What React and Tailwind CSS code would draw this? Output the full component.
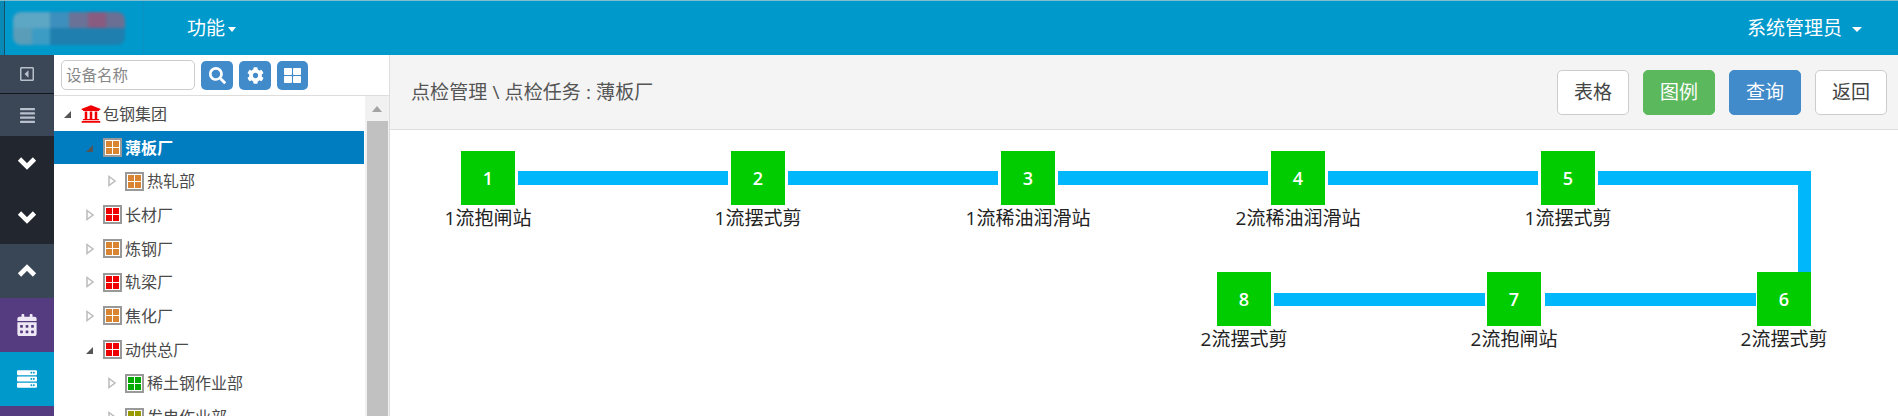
import {
  FaAlignJustify,
  FaCalendarAlt,
  FaCog,
  FaRegCaretSquareLeft,
  FaSearch,
  FaServer,
  FaThLarge,
  FaUniversity,
} from "react-icons/fa";

const FONT = "font-['Open_Sans','Noto_Sans_CJK_SC',sans-serif]";

function Chevron({ up }) {
  return (
    <svg width="20" height="14" viewBox="0 0 20 14">
      <path d={up ? "M2.5 11 L10 3.5 L17.5 11" : "M2.5 3 L10 10.5 L17.5 3"} fill="none" stroke="#fff" strokeWidth="4.6" />
    </svg>
  );
}

const SIDE_ITEMS = [
  { icon: <FaRegCaretSquareLeft size={16} />, cls: "h-[39px] bg-[#3b4657] border-b border-[#14171c] text-[#b8c0cc]" },
  { icon: <FaAlignJustify size={17} />, cls: "h-[42px] bg-[#3b4657] text-[#b8c0cc]" },
  { icon: <Chevron />, cls: "h-[54px] bg-[#22262e]" },
  { icon: <Chevron />, cls: "h-[54px] bg-[#22262e]" },
  { icon: <Chevron up />, cls: "h-[54px] bg-[#394655]" },
  { icon: <FaCalendarAlt size={22} />, cls: "h-[54px] bg-[#553b7f] text-[#eee8f5]" },
  { icon: <FaServer size={20} />, cls: "h-[54px] bg-[#0099cc] text-white" },
  { icon: null, cls: "h-[54px] bg-[#553b7f]" },
];

const TREE = [
  { label: "包钢集团", level: 0, open: true, bank: true },
  { label: "薄板厂", level: 1, open: true, color: "bg-[#d98433]", selected: true },
  { label: "热轧部", level: 2, color: "bg-[#d98433]" },
  { label: "长材厂", level: 1, color: "bg-[#ee0000]" },
  { label: "炼钢厂", level: 1, color: "bg-[#d98433]" },
  { label: "轨梁厂", level: 1, color: "bg-[#ee0000]" },
  { label: "焦化厂", level: 1, color: "bg-[#d98433]" },
  { label: "动供总厂", level: 1, open: true, color: "bg-[#ee0000]" },
  { label: "稀土钢作业部", level: 2, color: "bg-[#00aa00]" },
  { label: "发电作业部", level: 2, color: "bg-[#999900]" },
];

const INDENT = ["pl-[9px]", "pl-[31px]", "pl-[53px]"];

const NODES = [
  { n: 1, name: "1流抱闸站", pos: "left-[71px] top-[21px]" },
  { n: 2, name: "1流摆式剪", pos: "left-[341px] top-[21px]" },
  { n: 3, name: "1流稀油润滑站", pos: "left-[611px] top-[21px]" },
  { n: 4, name: "2流稀油润滑站", pos: "left-[881px] top-[21px]" },
  { n: 5, name: "1流摆式剪", pos: "left-[1151px] top-[21px]" },
  { n: 6, name: "2流摆式剪", pos: "left-[1367px] top-[142px]" },
  { n: 7, name: "2流抱闸站", pos: "left-[1097px] top-[142px]" },
  { n: 8, name: "2流摆式剪", pos: "left-[827px] top-[142px]" },
];

const LINES = [
  "left-[128px] top-[41px] w-[210px] h-[14px]",
  "left-[398px] top-[41px] w-[210px] h-[14px]",
  "left-[668px] top-[41px] w-[210px] h-[14px]",
  "left-[938px] top-[41px] w-[210px] h-[14px]",
  "left-[1208px] top-[41px] w-[213px] h-[14px]",
  "left-[1408px] top-[41px] w-[13px] h-[101px]",
  "left-[1155px] top-[163px] w-[211px] h-[13px]",
  "left-[884px] top-[163px] w-[211px] h-[13px]",
];

function NodeIcon({ color }) {
  return (
    <span className="grid h-[19px] w-[19px] shrink-0 grid-cols-2 gap-[1px] border-2 border-[#999] bg-white p-[1px]">
      <span className={color} />
      <span className={color} />
      <span className={color} />
      <span className={color} />
    </span>
  );
}

function Arrow({ open }) {
  return (
    <svg width="10" height="12" viewBox="0 0 10 12" className="shrink-0">
      {open ? (
        <path d="M1 10 L8 10 L8 3 Z" fill="#555" />
      ) : (
        <path d="M2 1.5 L8 6 L2 10.5 Z" fill="#fff" stroke="#bbb" strokeWidth="1.5" />
      )}
    </svg>
  );
}

function TreeRow({ item }) {
  return (
    <div
      className={`flex h-[33.7px] shrink-0 items-center ${INDENT[item.level]} ${
        item.selected ? "bg-[#007cc0] font-bold text-white" : "text-[#4a4a4a]"
      }`}
    >
      <Arrow open={item.open} />
      <span className="ml-[7px] mr-[2px] flex w-[21px] justify-center">
        {item.bank ? <FaUniversity size={20} color="#f00000" /> : <NodeIcon color={item.color} />}
      </span>
      <span className="whitespace-nowrap text-[16px] leading-none">{item.label}</span>
    </div>
  );
}

function ToolButton({ label, cls }) {
  return (
    <button className={`h-[45px] w-[72px] rounded-[5px] border text-[19px] ${cls}`}>{label}</button>
  );
}

function Logo() {
  return (
    <div className="ml-[8px] grid h-[33px] w-[112px] grid-cols-6 grid-rows-2 overflow-hidden rounded-lg blur-[1.5px]">
      <div className="col-span-2 bg-[#5da6c4]" />
      <div className="bg-[#3d8fbd]" />
      <div className="bg-[#6a7397]" />
      <div className="bg-[#8a5b80]" />
      <div className="bg-[#6a6f93]" />
      <div className="bg-[#5a9db8]" />
      <div className="bg-[#3c9cc4]" />
      <div className="col-span-4 bg-[#1f7fae]" />
    </div>
  );
}

export default function App() {
  return (
    <div className={`flex h-[416px] w-[1898px] flex-col overflow-hidden bg-white ${FONT}`}>
      <header className="flex h-[55px] shrink-0 items-center border-t border-[#7fbfd0] bg-[#0099cc] text-white">
        <div className="h-full w-[5px] shrink-0 border-r border-[#14506a] bg-[#0a88b6]" />
        <div className="flex h-full w-[139px] items-center border-r border-[#0a93c2]">
          <Logo />
        </div>
        <button className="ml-[43px] flex items-center text-[19px]">
          功能
          <span className="ml-[3px] mt-[2px] border-x-[4.5px] border-t-[5px] border-x-transparent border-t-white" />
        </button>
        <button className="ml-auto mr-[36px] flex items-center text-[19px]">
          系统管理员
          <span className="ml-[10px] mt-[2px] border-x-[5px] border-t-[5px] border-x-transparent border-t-white" />
        </button>
      </header>

      <div className="flex min-h-0 flex-1">
        <nav className="flex w-[54px] shrink-0 flex-col">
          {SIDE_ITEMS.map((item, i) => (
            <div key={i} className={`flex shrink-0 items-center justify-center ${item.cls}`}>
              {item.icon}
            </div>
          ))}
        </nav>

        <aside className="flex w-[336px] shrink-0 flex-col border-r border-[#ddd]">
          <div className="flex h-[41px] shrink-0 items-center border-b border-[#ddd] pl-[7px]">
            <input
              placeholder="设备名称"
              className="h-[30px] w-[134px] rounded-[5px] border border-[#ccc] px-[4px] text-[15.5px] placeholder:text-[#888]"
            />
            <div className="ml-[6px] flex gap-[6px]">
              <button className="flex h-[29px] w-[32px] items-center justify-center rounded-[5px] bg-[#428bca] text-white">
                <FaSearch size={17} />
              </button>
              <button className="flex h-[29px] w-[32px] items-center justify-center rounded-[5px] bg-[#428bca] text-white">
                <FaCog size={17} />
              </button>
              <button className="flex h-[29px] w-[31px] items-center justify-center rounded-[5px] bg-[#428bca] text-white">
                <FaThLarge size={17} />
              </button>
            </div>
          </div>
          <div className="flex min-h-0 flex-1 overflow-hidden">
            <div className="flex w-[310px] shrink-0 flex-col pt-[1px]">
              {TREE.map((item) => (
                <TreeRow key={item.label} item={item} />
              ))}
            </div>
            <div className="ml-[1px] flex w-[24px] flex-col bg-[#f1f1f1]">
              <div className="flex h-[25px] shrink-0 items-center justify-center">
                <span className="border-x-[5.5px] border-b-[6px] border-x-transparent border-b-[#a3a3a3]" />
              </div>
              <div className="ml-[2px] mr-[1px] flex-1 bg-[#c1c1c1]" />
            </div>
          </div>
        </aside>

        <main className="flex min-w-0 flex-1 flex-col">
          <div className="flex h-[75px] shrink-0 items-center justify-between border-b border-[#ddd] bg-[#f4f4f4] pl-[21px] pr-[11px]">
            <span className="whitespace-nowrap text-[19px] tracking-[0.1px] text-[#555]">点检管理 \ 点检任务 : 薄板厂</span>
            <div className="flex gap-[14px]">
              <ToolButton label="表格" cls="border-[#ccc] bg-white text-[#444]" />
              <ToolButton label="图例" cls="border-[#5cb85c] bg-[#5cb85c] text-white" />
              <ToolButton label="查询" cls="border-[#428bca] bg-[#428bca] text-white" />
              <ToolButton label="返回" cls="border-[#ccc] bg-white text-[#444]" />
            </div>
          </div>

          <div className="relative flex-1">
            {LINES.map((cls) => (
              <div key={cls} className={`absolute bg-[#00b7fb] ${cls}`} />
            ))}
            {NODES.map((node) => (
              <div key={node.n} className={`absolute flex w-[54px] flex-col items-center ${node.pos}`}>
                <div className="flex h-[54px] w-[54px] items-center justify-center bg-[#00cc00] text-[18px] font-semibold text-white">
                  {node.n}
                </div>
                <div className="whitespace-nowrap text-[19px] leading-[26px] text-[#222]">{node.name}</div>
              </div>
            ))}
          </div>
        </main>
      </div>
    </div>
  );
}
